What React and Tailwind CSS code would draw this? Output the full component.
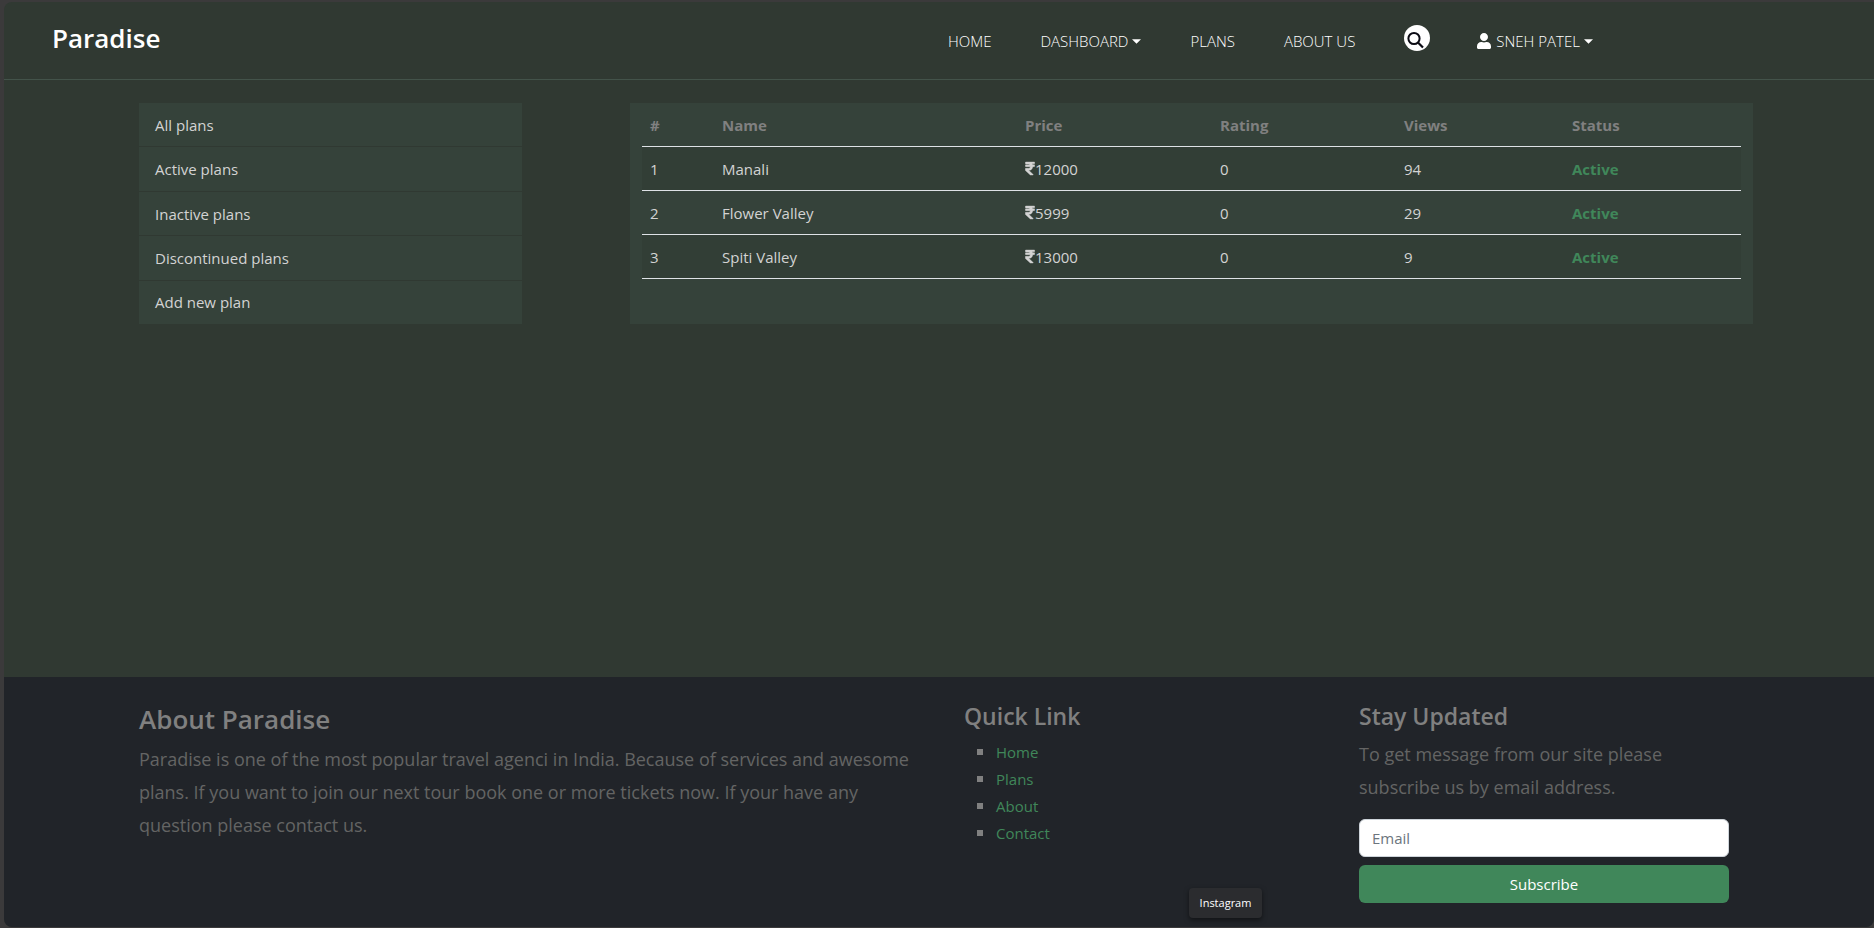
import { FaUser, FaRupeeSign } from "react-icons/fa";

const sideLinks = ["All plans", "Active plans", "Inactive plans", "Discontinued plans", "Add new plan"];

const plans = [
  { id: 1, name: "Manali", price: 12000, rating: 0, views: 94 },
  { id: 2, name: "Flower Valley", price: 5999, rating: 0, views: 29 },
  { id: 3, name: "Spiti Valley", price: 13000, rating: 0, views: 9 },
];

function Caret() {
  return (
    <svg viewBox="0 0 10 5" className="ml-1 h-[5px] w-[9px]" fill="currentColor" aria-hidden="true">
      <path d="M0 0h10L5 5z" />
    </svg>
  );
}

function SearchBadge() {
  return (
    <svg viewBox="0 0 26 26" className="size-[26px]" fill="none" aria-hidden="true">
      <circle cx="13" cy="13" r="13" fill="#fff" />
      <circle cx="10" cy="13.5" r="5.6" stroke="#0b0b14" strokeWidth="2" />
      <path d="M14 17.5l5 5" stroke="#0b0b14" strokeWidth="2.2" />
    </svg>
  );
}

function Header() {
  return (
    <header className="flex h-[78px] items-start border-b border-[#43534a] pl-12 text-white">
      <a href="#" className="w-[896px] pt-[18px] text-[26px] leading-9 font-semibold">Paradise</a>
      <nav className="flex items-center gap-[49px] pt-[23px] text-[15px] leading-8 font-light">
        <a href="#">HOME</a>
        <button className="flex items-center">DASHBOARD<Caret /></button>
        <a href="#">PLANS</a>
        <a href="#">ABOUT US</a>
        <div className="flex items-center gap-[46px]">
          <button aria-label="Search" className="mb-1.5">
            <SearchBadge />
          </button>
          <button className="flex items-center">
            <FaUser className="mr-1 size-4" />
            SNEH PATEL
            <Caret />
          </button>
        </div>
      </nav>
    </header>
  );
}

function PlansTable() {
  return (
    <table className="w-full table-fixed text-left text-[15px] leading-6">
      <thead>
        <tr className="border-b border-[#dee2e6] text-[#808080]">
          <th className="w-[72px] p-2 pt-[10px] pb-[9px]">#</th>
          <th className="w-[303px] p-2">Name</th>
          <th className="w-[195px] p-2">Price</th>
          <th className="w-[184px] p-2">Rating</th>
          <th className="w-[168px] p-2">Views</th>
          <th className="p-2">Status</th>
        </tr>
      </thead>
      <tbody>
        {plans.map((p) => (
          <tr key={p.id} className="h-11 border-b border-[#dee2e6] text-[#d3d3d3] odd:bg-[#323e36]">
            <td className="px-2">{p.id}</td>
            <td className="px-2">{p.name}</td>
            <td className="px-2">
              <span className="flex items-center">
                <FaRupeeSign className="h-[15px] w-[10px]" stroke="currentColor" strokeWidth="12" />
                {p.price}
              </span>
            </td>
            <td className="px-2">{p.rating}</td>
            <td className="px-2">{p.views}</td>
            <td className="px-2 font-bold text-[#40875a]">Active</td>
          </tr>
        ))}
      </tbody>
    </table>
  );
}

function Footer() {
  return (
    <footer className="relative flex h-[250px] bg-[#212429] pt-6 pr-[145px] pl-[135px] text-[#808080]">
      <section className="w-[825px] pr-10">
        <h2 className="text-[26px] leading-9 font-semibold">About Paradise</h2>
        <p className="mt-1.5 text-[18px] leading-[33px] text-[#646464]">
          Paradise is one of the most popular travel agenci in India. Because of services and awesome plans. If you want to join our next tour book one or more tickets now. If your have any question please contact us.
        </p>
      </section>
      <section className="w-[395px]">
        <h3 className="text-[23px] leading-[30px] font-semibold">Quick Link</h3>
        <ul className="mt-[7px] list-[square] pl-8 text-[15px] leading-[26px] marker:text-[18px]">
          {["Home", "Plans", "About", "Contact"].map((l) => (
            <li key={l}><a href="#" className="text-[#40875a]">{l}</a></li>
          ))}
        </ul>
      </section>
      <section className="flex-1">
        <h3 className="text-[23px] leading-[30px] font-semibold">Stay Updated</h3>
        <p className="mt-[7px] text-[18px] leading-[33px] text-[#646464]">
          To get message from our site please<br />subscribe us by email address.
        </p>
        <form className="mt-[15px] flex flex-col gap-2 text-[15px] leading-6">
          <input type="email" aria-label="Email" placeholder="Email" className="h-[38px] rounded-md border border-[#ced4da] bg-white px-3 text-black placeholder:text-[#6c757d]" />
          <button type="button" className="h-[38px] rounded-md bg-[#40875a] text-white">Subscribe</button>
        </form>
      </section>
      <div role="tooltip" className="absolute right-[612px] bottom-[9px] flex h-[30px] w-[73px] items-center justify-center rounded bg-[#2b2c2f] text-[11px] font-medium text-white shadow-[0_2px_5px_rgba(0,0,0,0.5)]">
        Instagram
      </div>
    </footer>
  );
}

export default function App() {
  return (
    <div className="min-h-screen bg-[#3b3a3b] pt-0.5 pb-px pl-1 font-['Open_Sans',sans-serif]">
      <div className="flex min-h-[calc(100vh-3px)] flex-col overflow-hidden rounded-l-lg rounded-br-lg bg-[#303932]">
        <Header />
        <main className="flex flex-1 items-start gap-[108px] pt-[23px] pr-[121px] pl-[135px]">
          <nav className="flex min-h-[221px] w-[383px] flex-col gap-px text-[15px] leading-6 text-[#d3d3d3]">
            {sideLinks.map((l) => (
              <a key={l} href="#" className="flex flex-1 items-center bg-[#35423a] px-4">{l}</a>
            ))}
          </nav>
          <section className="min-w-0 flex-1">
            <div className="min-h-[221px] bg-[#35423a] px-3">
              <PlansTable />
            </div>
          </section>
        </main>
        <Footer />
      </div>
    </div>
  );
}
